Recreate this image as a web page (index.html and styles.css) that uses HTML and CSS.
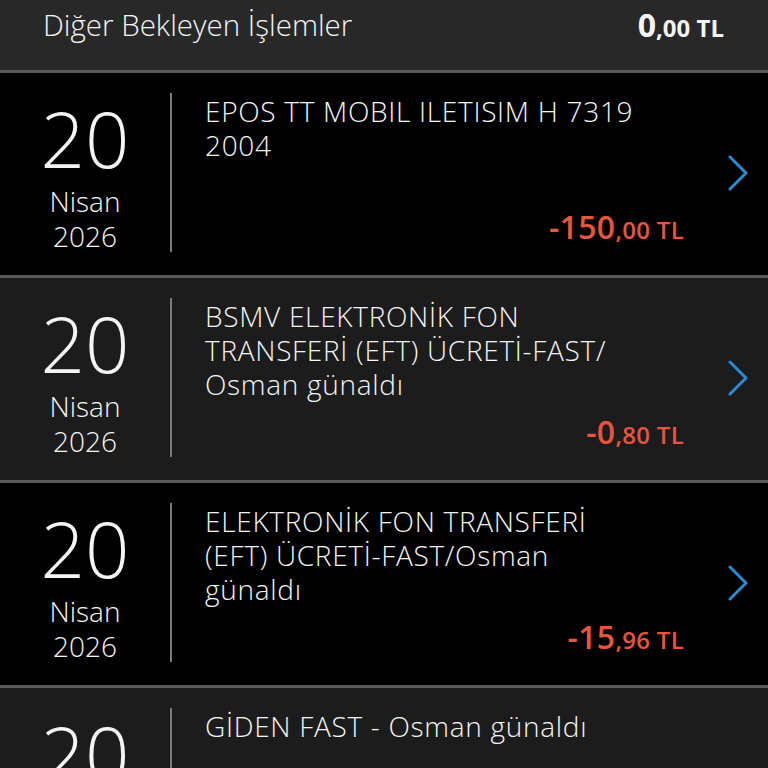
FILE: index.html
```html
<!DOCTYPE html>
<html lang="tr">
<head>
<meta charset="utf-8">
<link rel="stylesheet" href="styles.css">
</head>
<body>
<div class="header">
  <div class="header-title">Diğer Bekleyen İşlemler</div>
  <div class="header-amount"><span class="big">0</span><span class="small">,00 TL</span></div>
</div>

<div class="row black">
  <div class="date"><div class="day">20</div><div class="month">Nisan</div><div class="year">2026</div></div>
  <div class="divider"></div>
  <div class="body">
    <div class="title">EPOS TT MOBIL ILETISIM H 7319<br>2004</div>
    <div class="amount"><span class="big">-150</span><span class="small">,00 TL</span></div>
  </div>
  <div class="chev"><svg width="22" height="36" viewBox="0 0 22 36"><polyline points="3,2 19,18 3,34" fill="none" stroke="#2b8bd3" stroke-width="3" stroke-linecap="round" stroke-linejoin="round"/></svg></div>
</div>

<div class="row gray">
  <div class="date"><div class="day">20</div><div class="month">Nisan</div><div class="year">2026</div></div>
  <div class="divider"></div>
  <div class="body">
    <div class="title">BSMV ELEKTRONİK FON<br>TRANSFERİ (EFT) ÜCRETİ-FAST/<br>Osman günaldı</div>
    <div class="amount"><span class="big">-0</span><span class="small">,80 TL</span></div>
  </div>
  <div class="chev"><svg width="22" height="36" viewBox="0 0 22 36"><polyline points="3,2 19,18 3,34" fill="none" stroke="#2b8bd3" stroke-width="3" stroke-linecap="round" stroke-linejoin="round"/></svg></div>
</div>

<div class="row black">
  <div class="date"><div class="day">20</div><div class="month">Nisan</div><div class="year">2026</div></div>
  <div class="divider"></div>
  <div class="body">
    <div class="title">ELEKTRONİK FON TRANSFERİ<br>(EFT) ÜCRETİ-FAST/Osman<br>günaldı</div>
    <div class="amount"><span class="big">-15</span><span class="small">,96 TL</span></div>
  </div>
  <div class="chev"><svg width="22" height="36" viewBox="0 0 22 36"><polyline points="3,2 19,18 3,34" fill="none" stroke="#2b8bd3" stroke-width="3" stroke-linecap="round" stroke-linejoin="round"/></svg></div>
</div>

<div class="row gray">
  <div class="date"><div class="day">20</div><div class="month">Nisan</div><div class="year">2026</div></div>
  <div class="divider"></div>
  <div class="body">
    <div class="title">GİDEN FAST - Osman günaldı</div>
    <div class="amount"><span class="big">-500</span><span class="small">,00 TL</span></div>
  </div>
  <div class="chev"><svg width="22" height="36" viewBox="0 0 22 36"><polyline points="3,2 19,18 3,34" fill="none" stroke="#2b8bd3" stroke-width="3" stroke-linecap="round" stroke-linejoin="round"/></svg></div>
</div>
</body>
</html>
```

FILE: styles.css
```css
html, body {
  margin: 0;
  padding: 0;
  background: #000;
  overflow: hidden;
}
body {
  font-family: "Open Sans", "Noto Sans", sans-serif;
  color: #f4f4f4;
  width: 768px;
  height: 768px;
}
.header {
  box-sizing: border-box;
  height: 73px;
  background: #282828;
  border-bottom: 3px solid #5a5a5a;
  display: flex;
  justify-content: space-between;
  align-items: flex-start;
  padding: 7px 44px 0 43px;
}
.header-title {
  font-size: 29.5px;
  font-weight: 300;
  line-height: 36px;
}
.header-amount {
  font-size: 32px;
  font-weight: 700;
  line-height: 36px;
}
.header-amount .small { font-size: 24px; }

.row {
  height: 205px;
  box-sizing: border-box;
  padding: 20px 0 23px;
  border-bottom: 3px solid #5a5a5a;
  display: flex;
}
.row.black { background: #000; }
.row.gray { background: #1c1c1c; }

.date {
  width: 170px;
  display: flex;
  flex-direction: column;
  align-items: center;
  justify-content: center;
}
.day {
  font-size: 78px;
  font-weight: 300;
  line-height: 92px;
}
.month, .year {
  font-size: 28px;
  font-weight: 300;
  line-height: 35px;
}
.divider {
  width: 2px;
  background: #7c7c7c;
}
.body {
  flex: 1;
  padding-left: 33px;
  padding-top: 1px;
  display: flex;
  flex-direction: column;
}
.title {
  font-size: 28px;
  font-weight: 300;
  letter-spacing: 0.7px;
  line-height: 34px;
  white-space: nowrap;
}
.amount {
  margin-top: auto;
  text-align: right;
  color: #e6553e;
  font-weight: 600;
  font-size: 32px;
  line-height: 30px;
  letter-spacing: 0.3px;
  padding-bottom: 7px;
}
.amount .small { font-size: 24px; }
.chev {
  width: 84px;
  box-sizing: border-box;
  padding-right: 19px;
  display: flex;
  align-items: center;
  justify-content: flex-end;
}
.chev svg { display: block; }
```
